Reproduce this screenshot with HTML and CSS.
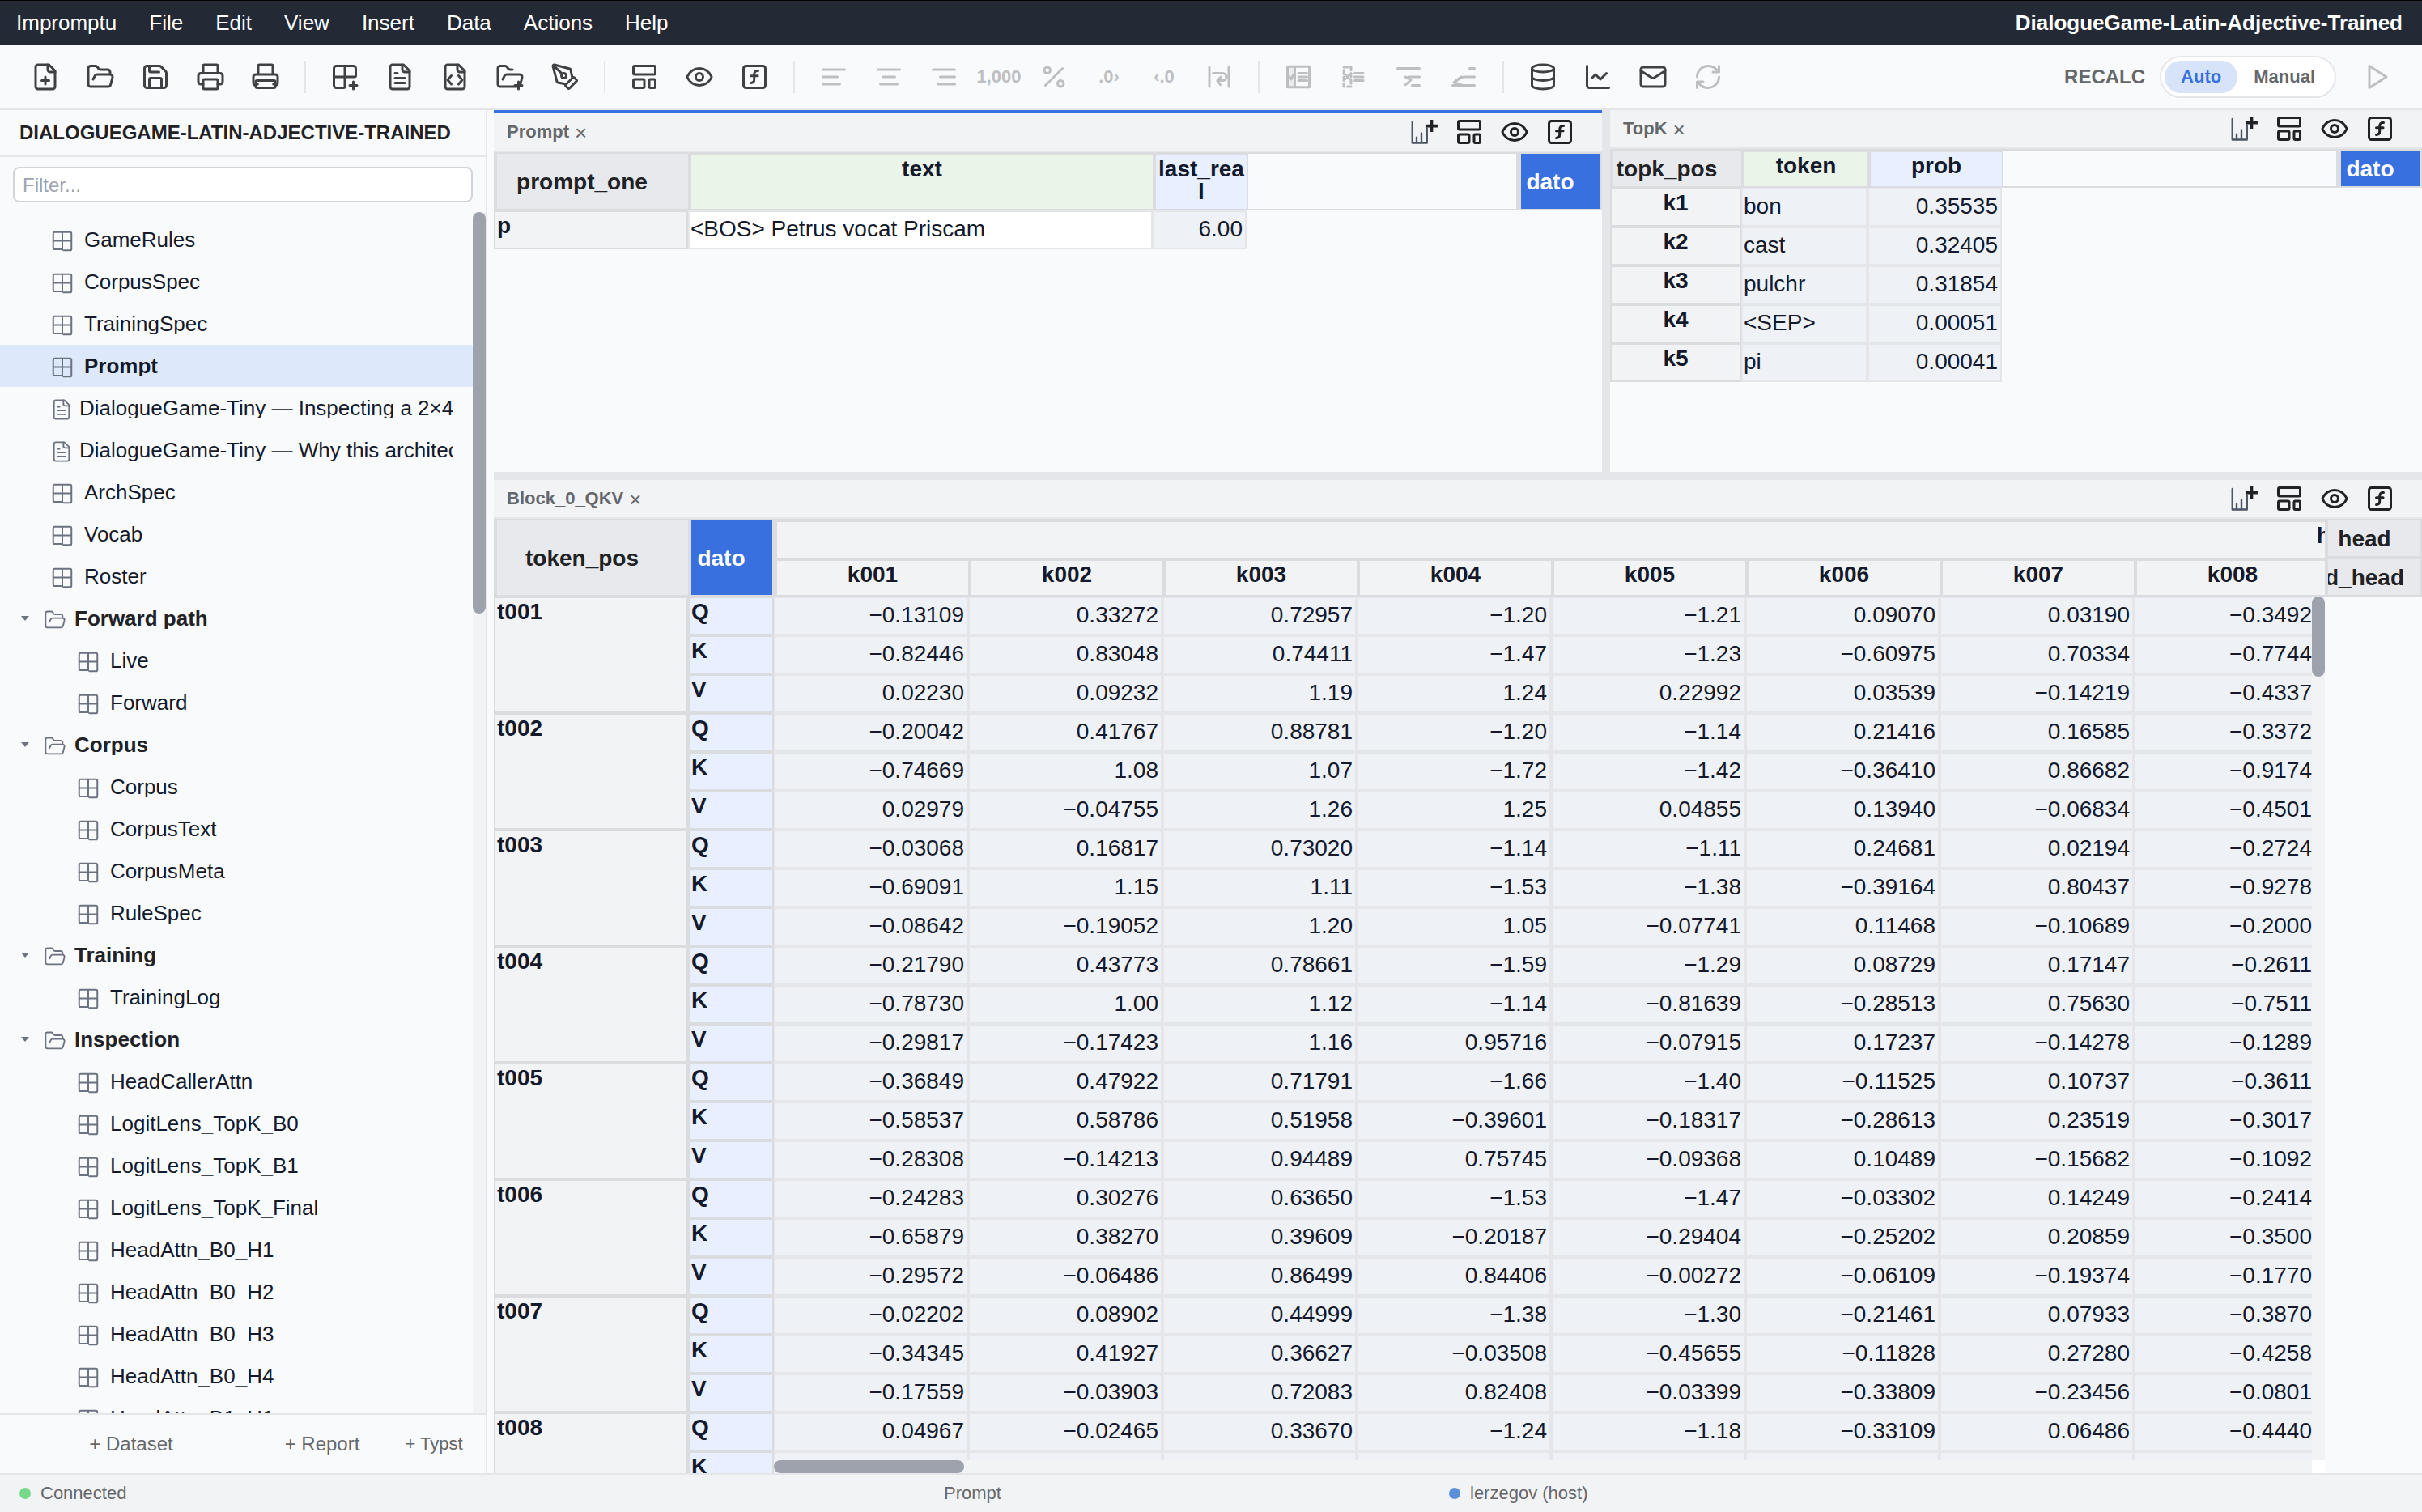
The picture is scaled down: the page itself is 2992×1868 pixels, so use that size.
FILE: index.html
```html
<!DOCTYPE html>
<html lang="en">
<head>
    <meta charset="UTF-8">
    <meta name="viewport" content="width=device-width, initial-scale=1.0">
    <title>Impromptu</title>
    <link rel="stylesheet" href="styles.css">
</head>
<body>
    <!-- Icon sprite -->
    <svg class="sprite" aria-hidden="true">
        <symbol id="i-new" viewBox="0 0 24 24"><path d="M15 2H6a2 2 0 0 0-2 2v16a2 2 0 0 0 2 2h12a2 2 0 0 0 2-2V7Z"/><path d="M14 2v4a2 2 0 0 0 2 2h4M9 15h6M12 18v-6"/></symbol>
        <symbol id="i-open" viewBox="0 0 24 24"><path d="m6 14 1.5-2.9A2 2 0 0 1 9.24 10H20a2 2 0 0 1 1.94 2.5l-1.54 6a2 2 0 0 1-1.95 1.5H4a2 2 0 0 1-2-2V5a2 2 0 0 1 2-2h3.9a2 2 0 0 1 1.69.9l.81 1.2a2 2 0 0 0 1.67.9H18a2 2 0 0 1 2 2v2"/></symbol>
        <symbol id="i-save" viewBox="0 0 24 24"><path d="M15.2 3a2 2 0 0 1 1.4.6l3.8 3.8a2 2 0 0 1 .6 1.4V19a2 2 0 0 1-2 2H5a2 2 0 0 1-2-2V5a2 2 0 0 1 2-2z"/><path d="M17 21v-7a1 1 0 0 0-1-1H8a1 1 0 0 0-1 1v7M7 3v4a1 1 0 0 0 1 1h7"/></symbol>
        <symbol id="i-print" viewBox="0 0 24 24"><path d="M6 18H4a2 2 0 0 1-2-2v-5a2 2 0 0 1 2-2h16a2 2 0 0 1 2 2v5a2 2 0 0 1-2 2h-2M6 9V3a1 1 0 0 1 1-1h10a1 1 0 0 1 1 1v6"/><rect x="6" y="14" width="12" height="8" rx="1"/></symbol>
        <symbol id="i-print-page" viewBox="0 0 24 24"><path d="M4 19a2 2 0 0 1-2-2v-5a2 2 0 0 1 2-2h16a2 2 0 0 1 2 2v5a2 2 0 0 1-2 2M6 10V3a1 1 0 0 1 1-1h10a1 1 0 0 1 1 1v7"/><path d="M5 15h14a1 1 0 0 1 1 1v4a1 1 0 0 1-1 1H5a1 1 0 0 1-1-1v-4a1 1 0 0 1 1-1zM4 18h1.5M18.5 18H20"/></symbol>
        <symbol id="i-table-add" viewBox="0 0 24 24"><path d="M12 3v17a1 1 0 0 1-1 1H5a2 2 0 0 1-2-2V5a2 2 0 0 1 2-2h14a2 2 0 0 1 2 2v6a1 1 0 0 1-1 1H3M16 19h6M19 22v-6"/></symbol>
        <symbol id="i-doc" viewBox="0 0 24 24"><path d="M15 2H6a2 2 0 0 0-2 2v16a2 2 0 0 0 2 2h12a2 2 0 0 0 2-2V7Z"/><path d="M14 2v4a2 2 0 0 0 2 2h4M10 9H8M16 13H8M16 17H8"/></symbol>
        <symbol id="i-code" viewBox="0 0 24 24"><path d="M15 2H6a2 2 0 0 0-2 2v16a2 2 0 0 0 2 2h12a2 2 0 0 0 2-2V7Z"/><path d="M14 2v4a2 2 0 0 0 2 2h4M9 11l-3 3.5L9 18M15 11l3 3.5-3 3.5"/></symbol>
        <symbol id="i-folder-add" viewBox="0 0 24 24"><path d="m6 14 1.5-2.9A2 2 0 0 1 9.24 10H20a2 2 0 0 1 1.94 2.5l-1.54 6a2 2 0 0 1-1.95 1.5H4a2 2 0 0 1-2-2V5a2 2 0 0 1 2-2h3.9a2 2 0 0 1 1.69.9l.81 1.2a2 2 0 0 0 1.67.9H14M16 19h6M19 22v-6"/></symbol>
        <symbol id="i-pen" viewBox="0 0 24 24"><path d="M15.707 21.293a1 1 0 0 1-1.414 0l-1.586-1.586a1 1 0 0 1 0-1.414l5.586-5.586a1 1 0 0 1 1.414 0l1.586 1.586a1 1 0 0 1 0 1.414zM18 13l-1.375-6.874a1 1 0 0 0-.746-.776L3.235 2.028a1 1 0 0 0-1.207 1.207L5.35 15.879a1 1 0 0 0 .776.746L13 18M2.3 2.3l7.286 7.286"/><circle cx="11" cy="11" r="2"/></symbol>
        <symbol id="i-layout" viewBox="0 0 24 24"><rect x="3" y="3" width="18" height="7" rx="1"/><rect x="3" y="14" width="9" height="7" rx="1"/><rect x="16" y="14" width="5" height="7" rx="1"/></symbol>
        <symbol id="i-eye" viewBox="0 0 24 24"><path d="M2.062 12.348a1 1 0 0 1 0-.696 10.75 10.75 0 0 1 19.876 0 1 1 0 0 1 0 .696 10.75 10.75 0 0 1-19.876 0"/><circle cx="12" cy="12" r="3"/></symbol>
        <symbol id="i-fn" viewBox="0 0 24 24"><rect x="3" y="3" width="18" height="18" rx="2"/><path d="M9 17c2 0 2.8-1 2.8-2.8V10c0-2 1-3.3 3.2-3M9 11.2h5.7"/></symbol>
        <symbol id="i-left" viewBox="0 0 24 24"><path d="M21 6H3M15 12H3M17 18H3"/></symbol>
        <symbol id="i-center" viewBox="0 0 24 24"><path d="M21 6H3M17 12H7M19 18H5"/></symbol>
        <symbol id="i-right" viewBox="0 0 24 24"><path d="M21 6H3M21 12H9M21 18H7"/></symbol>
        <symbol id="i-percent" viewBox="0 0 24 24"><path d="M19 5 5 19"/><circle cx="6.5" cy="6.5" r="2.5"/><circle cx="17.5" cy="17.5" r="2.5"/></symbol>
        <symbol id="i-wrap" viewBox="0 0 24 24"><path d="M4 4v16M20 4v16M7 9h8a3 3 0 0 1 0 6h-4M13.5 12l-3 3 2.5 3.500"/></symbol>
        <symbol id="i-rowlabel" viewBox="0 0 24 24"><path fill="currentColor" fill-opacity=".25" stroke="none" d="M3 4h6v16H3z"/><path d="M3 3.5h18v17H3zM9 3.5v17M4.500 12 6 14l2-4M12 9h7M12 12h7M12 15h7"/></symbol>
        <symbol id="i-rowskip" viewBox="0 0 24 24"><path stroke-dasharray="3 2.5" d="M4 4h6v16H4z"/><path d="M5 10l4 4M9 10l-4 4M13 9h7M13 12h7M13 15h7"/></symbol>
        <symbol id="i-sumtop" viewBox="0 0 24 24"><path d="M3 5h18M21 12h-9M9.500 12l4.500 2.500-4.500 4M10 12.500l4 2M15 19h6"/></symbol>
        <symbol id="i-sumbottom" viewBox="0 0 24 24"><path d="M17 5h4M21 12h-8c-3 0-5 2-9 4.500M10 12l-6 4.500 6 2M3 19h18"/></symbol>
        <symbol id="i-db" viewBox="0 0 24 24"><ellipse cx="12" cy="5" rx="9" ry="3"/><path d="M3 5v14a9 3 0 0 0 18 0V5M3 12a9 3 0 0 0 18 0"/></symbol>
        <symbol id="i-chart" viewBox="0 0 24 24"><path d="M3 3v16a2 2 0 0 0 2 2h16M19 9l-5 5-4-4-3 3"/></symbol>
        <symbol id="i-mail" viewBox="0 0 24 24"><rect x="2" y="4" width="20" height="16" rx="2"/><path d="m22 7-8.97 5.7a1.94 1.94 0 0 1-2.06 0L2 7"/></symbol>
        <symbol id="i-refresh" viewBox="0 0 24 24"><path d="M3 12a9 9 0 0 1 9-9 9.75 9.75 0 0 1 6.74 2.74L21 8M21 3v5h-5M21 12a9 9 0 0 1-9 9 9.75 9.75 0 0 1-6.74-2.74L3 16M8 16H3v5"/></symbol>
        <symbol id="i-play" viewBox="0 0 24 24"><path d="M6 3l14 9-14 9z"/></symbol>
        <symbol id="i-chart-add" viewBox="0 0 24 24"><path stroke="#4b5563" stroke-width="1.6" d="M2.5 4v17h12V9M6 21v-4.500M10 21v-8"/><path stroke-width="2.5" stroke-linecap="butt" d="M13.300 7h10M18.300 2v10"/></symbol>
        <symbol id="i-grid" viewBox="0 0 24 24"><path d="M12 20H4.500A1.500 1.500 0 0 1 3 18.500v-14A1.500 1.500 0 0 1 4.500 3h15A1.500 1.500 0 0 1 21 4.500v15a1.500 1.500 0 0 1-1.500 1.500H13M12 3v17M3 11.500h18"/></symbol>
    </svg>

    <!-- Menu bar -->
    <header class="menubar">
        <nav class="menus">
            <button>Impromptu</button>
            <button>File</button>
            <button>Edit</button>
            <button>View</button>
            <button>Insert</button>
            <button>Data</button>
            <button>Actions</button>
            <button>Help</button>
        </nav>
        <div class="doc-title">DialogueGame-Latin-Adjective-Trained</div>
    </header>

    <!-- Toolbar -->
    <div class="toolbar">
        <button class="tool" aria-label="New"><svg><use href="#i-new"/></svg></button>
        <button class="tool" aria-label="Open"><svg><use href="#i-open"/></svg></button>
        <button class="tool" aria-label="Save"><svg><use href="#i-save"/></svg></button>
        <button class="tool" aria-label="Print"><svg><use href="#i-print"/></svg></button>
        <button class="tool" aria-label="Print page"><svg><use href="#i-print-page"/></svg></button>
        <span class="sep"></span>
        <button class="tool" aria-label="Add dataset"><svg><use href="#i-table-add"/></svg></button>
        <button class="tool" aria-label="Add report"><svg><use href="#i-doc"/></svg></button>
        <button class="tool" aria-label="Add code"><svg><use href="#i-code"/></svg></button>
        <button class="tool" aria-label="Add folder"><svg><use href="#i-folder-add"/></svg></button>
        <button class="tool" aria-label="Pen"><svg><use href="#i-pen"/></svg></button>
        <span class="sep"></span>
        <button class="tool" aria-label="Layout"><svg><use href="#i-layout"/></svg></button>
        <button class="tool" aria-label="View"><svg><use href="#i-eye"/></svg></button>
        <button class="tool" aria-label="Formula"><svg><use href="#i-fn"/></svg></button>
        <span class="sep"></span>
        <button class="tool" disabled aria-label="Align left"><svg><use href="#i-left"/></svg></button>
        <button class="tool" disabled aria-label="Align center"><svg><use href="#i-center"/></svg></button>
        <button class="tool" disabled aria-label="Align right"><svg><use href="#i-right"/></svg></button>
        <button class="tool" disabled>1,000</button>
        <button class="tool" disabled aria-label="Percent"><svg><use href="#i-percent"/></svg></button>
        <button class="tool" disabled>.0›</button>
        <button class="tool" disabled>‹.0</button>
        <button class="tool" disabled aria-label="Wrap"><svg><use href="#i-wrap"/></svg></button>
        <span class="sep"></span>
        <button class="tool" disabled aria-label="Row labels"><svg><use href="#i-rowlabel"/></svg></button>
        <button class="tool" disabled aria-label="Skip rows"><svg><use href="#i-rowskip"/></svg></button>
        <button class="tool" disabled aria-label="Total above"><svg><use href="#i-sumtop"/></svg></button>
        <button class="tool" disabled aria-label="Total below"><svg><use href="#i-sumbottom"/></svg></button>
        <span class="sep"></span>
        <button class="tool" aria-label="Database"><svg><use href="#i-db"/></svg></button>
        <button class="tool" aria-label="Chart"><svg><use href="#i-chart"/></svg></button>
        <button class="tool" aria-label="Mail"><svg><use href="#i-mail"/></svg></button>
        <button class="tool" disabled aria-label="Refresh"><svg><use href="#i-refresh"/></svg></button>

        <div class="recalc">
            <span class="recalc-label">RECALC</span>
            <div class="switch">
                <button class="active">Auto</button>
                <button>Manual</button>
            </div>
            <button class="tool" disabled aria-label="Run"><svg><use href="#i-play"/></svg></button>
        </div>
    </div>

    <div class="app">
        <!-- Sidebar -->
        <aside class="sidebar">
            <h2 class="sidebar-title">DIALOGUEGAME-LATIN-ADJECTIVE-TRAINED</h2>
            <div class="filter">
                <input type="text" placeholder="Filter..." aria-label="Filter">
            </div>
            <div class="tree-wrap">
                <div class="tree">
                    <button class="item"><svg><use href="#i-grid"/></svg><span>GameRules</span></button>
                    <button class="item"><svg><use href="#i-grid"/></svg><span>CorpusSpec</span></button>
                    <button class="item"><svg><use href="#i-grid"/></svg><span>TrainingSpec</span></button>
                    <button class="item active"><svg><use href="#i-grid"/></svg><span>Prompt</span></button>
                    <button class="item doc"><svg><use href="#i-doc"/></svg><span>DialogueGame-Tiny — Inspecting a 2×4</span></button>
                    <button class="item doc"><svg><use href="#i-doc"/></svg><span>DialogueGame-Tiny — Why this architecture</span></button>
                    <button class="item"><svg><use href="#i-grid"/></svg><span>ArchSpec</span></button>
                    <button class="item"><svg><use href="#i-grid"/></svg><span>Vocab</span></button>
                    <button class="item"><svg><use href="#i-grid"/></svg><span>Roster</span></button>
                    <button class="item folder"><i class="caret"></i><svg><use href="#i-open"/></svg><span>Forward path</span></button>
                    <button class="item nested"><svg><use href="#i-grid"/></svg><span>Live</span></button>
                    <button class="item nested"><svg><use href="#i-grid"/></svg><span>Forward</span></button>
                    <button class="item folder"><i class="caret"></i><svg><use href="#i-open"/></svg><span>Corpus</span></button>
                    <button class="item nested"><svg><use href="#i-grid"/></svg><span>Corpus</span></button>
                    <button class="item nested"><svg><use href="#i-grid"/></svg><span>CorpusText</span></button>
                    <button class="item nested"><svg><use href="#i-grid"/></svg><span>CorpusMeta</span></button>
                    <button class="item nested"><svg><use href="#i-grid"/></svg><span>RuleSpec</span></button>
                    <button class="item folder"><i class="caret"></i><svg><use href="#i-open"/></svg><span>Training</span></button>
                    <button class="item nested"><svg><use href="#i-grid"/></svg><span>TrainingLog</span></button>
                    <button class="item folder"><i class="caret"></i><svg><use href="#i-open"/></svg><span>Inspection</span></button>
                    <button class="item nested"><svg><use href="#i-grid"/></svg><span>HeadCallerAttn</span></button>
                    <button class="item nested"><svg><use href="#i-grid"/></svg><span>LogitLens_TopK_B0</span></button>
                    <button class="item nested"><svg><use href="#i-grid"/></svg><span>LogitLens_TopK_B1</span></button>
                    <button class="item nested"><svg><use href="#i-grid"/></svg><span>LogitLens_TopK_Final</span></button>
                    <button class="item nested"><svg><use href="#i-grid"/></svg><span>HeadAttn_B0_H1</span></button>
                    <button class="item nested"><svg><use href="#i-grid"/></svg><span>HeadAttn_B0_H2</span></button>
                    <button class="item nested"><svg><use href="#i-grid"/></svg><span>HeadAttn_B0_H3</span></button>
                    <button class="item nested"><svg><use href="#i-grid"/></svg><span>HeadAttn_B0_H4</span></button>
                    <button class="item nested"><svg><use href="#i-grid"/></svg><span>HeadAttn_B1_H1</span></button>
                </div>
                <div class="track"><div class="thumb thumb-tree"></div></div>
            </div>
            <div class="add-bar">
                <button>+ Dataset</button>
                <button>+ Report</button>
                <button class="small">+ Typst</button>
            </div>
        </aside>

        <!-- Panes -->
        <main class="workspace">
            <section class="pane pane-prompt focused">
                <div class="pane-header">
                    <span class="pane-title">Prompt</span>
                    <button class="close" aria-label="Close">×</button>
                    <div class="pane-tools">
                        <button aria-label="Add chart"><svg><use href="#i-chart-add"/></svg></button>
                        <button aria-label="Layout"><svg><use href="#i-layout"/></svg></button>
                        <button aria-label="View"><svg><use href="#i-eye"/></svg></button>
                        <button aria-label="Formula"><svg><use href="#i-fn"/></svg></button>
                    </div>
                </div>
                <table class="grid">
                    <colgroup><col class="w-axis"><col class="w-text"><col class="w-real"><col><col class="w-dato"></colgroup>
                    <thead>
                        <tr class="tall">
                            <th class="corner">prompt_one</th>
                            <th class="col green">text</th>
                            <th class="col blue">last_real</th>
                            <th class="filler"></th>
                            <th class="dato side">dato</th>
                        </tr>
                    </thead>
                    <tbody>
                        <tr><th class="row">p</th><td class="str input">&lt;BOS&gt; Petrus vocat Priscam</td><td>6.00</td></tr>
                    </tbody>
                </table>
            </section>

            <div class="split split-v"></div>

            <section class="pane pane-topk">
                <div class="pane-header">
                    <span class="pane-title">TopK</span>
                    <button class="close" aria-label="Close">×</button>
                    <div class="pane-tools">
                        <button aria-label="Add chart"><svg><use href="#i-chart-add"/></svg></button>
                        <button aria-label="Layout"><svg><use href="#i-layout"/></svg></button>
                        <button aria-label="View"><svg><use href="#i-eye"/></svg></button>
                        <button aria-label="Formula"><svg><use href="#i-fn"/></svg></button>
                    </div>
                </div>
                <table class="grid">
                    <colgroup><col class="w-pos"><col class="w-token"><col class="w-prob"><col><col class="w-dato"></colgroup>
                    <thead>
                        <tr>
                            <th class="corner">topk_pos</th>
                            <th class="col green">token</th>
                            <th class="col blue">prob</th>
                            <th class="filler"></th>
                            <th class="dato side">dato</th>
                        </tr>
                    </thead>
                    <tbody>
                        <tr><th class="row mid">k1</th><td class="str">bon</td><td>0.35535</td></tr>
                        <tr><th class="row mid">k2</th><td class="str">cast</td><td>0.32405</td></tr>
                        <tr><th class="row mid">k3</th><td class="str">pulchr</td><td>0.31854</td></tr>
                        <tr><th class="row mid">k4</th><td class="str">&lt;SEP&gt;</td><td>0.00051</td></tr>
                        <tr><th class="row mid">k5</th><td class="str">pi</td><td>0.00041</td></tr>
                    </tbody>
                </table>
            </section>

            <div class="split split-h"></div>

            <section class="pane pane-block">
                <div class="pane-header">
                    <span class="pane-title">Block_0_QKV</span>
                    <button class="close" aria-label="Close">×</button>
                    <div class="pane-tools">
                        <button aria-label="Add chart"><svg><use href="#i-chart-add"/></svg></button>
                        <button aria-label="Layout"><svg><use href="#i-layout"/></svg></button>
                        <button aria-label="View"><svg><use href="#i-eye"/></svg></button>
                        <button aria-label="Formula"><svg><use href="#i-fn"/></svg></button>
                    </div>
                </div>
                <div class="block-body">
                    <div class="block-view">
                        <table class="grid wide">
                            <colgroup><col class="w-axis"><col class="w-qkv"><col span="16"></colgroup>
                            <thead>
                                <tr class="group-row">
                                    <th class="corner" rowspan="2">token_pos</th>
                                    <th class="dato" rowspan="2">dato</th>
                                    <th class="col" colspan="16">h1</th>
                                </tr>
                                <tr class="key-row">
                                    <th class="col">k001</th><th class="col">k002</th><th class="col">k003</th><th class="col">k004</th>
                                    <th class="col">k005</th><th class="col">k006</th><th class="col">k007</th><th class="col">k008</th>
                                </tr>
                            </thead>
                            <tbody id="blockRows"></tbody>
                        </table>
                        <div class="track track-y"><div class="thumb thumb-y"></div></div>
                        <div class="track track-x"><div class="thumb thumb-x"></div></div>
                        <div class="track-corner"></div>
                    </div>
                    <div class="block-axes">
                        <div class="axis">head</div>
                        <div class="axis">d_head</div>
                    </div>
                </div>
            </section>
        </main>
    </div>

    <!-- Status bar -->
    <footer class="statusbar">
        <div class="status"><i class="dot online"></i>Connected</div>
        <div class="status">Prompt</div>
        <div class="status"><i class="dot user"></i>lerzegov (host)</div>
    </footer>

    <script src="script.js"></script>
</body>
</html>
```

FILE: styles.css
```css
* {
    margin: 0;
    padding: 0;
    box-sizing: border-box;
}

:root {
    --bg: #f9fafc;
    --panel: #f2f3f5;
    --line: #e5e6e9;
    --head-line: #dbdce0;
    --accent: #3870e0;
    --text: #141a2b;
    --strong: #202225;
    --muted: #65676b;
    --icon: #3f4144;
    --thumb: #9ea2ad;
}

body {
    height: 100vh;
    display: flex;
    flex-direction: column;
    overflow: hidden;
    background: var(--bg);
    color: var(--text);
    font-family: "Liberation Sans", Arial, sans-serif;
    font-size: 26px;
}

button {
    background: none;
    border: none;
    color: inherit;
    font: inherit;
    cursor: pointer;
}

svg {
    display: block;
    width: 36px;
    height: 36px;
    flex-shrink: 0;
    fill: none;
    stroke: currentColor;
    stroke-width: 2;
    stroke-linecap: round;
    stroke-linejoin: round;
}

.sprite {
    display: none;
}

/* Menu bar */
.menubar {
    height: 56px;
    flex-shrink: 0;
    display: flex;
    align-items: center;
    justify-content: space-between;
    padding-right: 24px;
    background: #232935;
    border-top: 1px solid #000;
    color: #fff;
}

.menus {
    display: flex;
}

.menus button {
    padding: 0 20px;
}

.doc-title {
    font-weight: 600;
}

/* Toolbar */
.toolbar {
    height: 80px;
    flex-shrink: 0;
    display: flex;
    align-items: center;
    gap: 4px;
    padding: 0 24px;
    border-bottom: 2px solid var(--line);
}

.tool {
    width: 64px;
    height: 56px;
    display: flex;
    align-items: center;
    justify-content: center;
    color: var(--icon);
    font-size: 22px;
    font-weight: 600;
}

.tool:disabled {
    color: #bebfc1;
}

.sep {
    width: 2px;
    height: 40px;
    margin: 0 12px;
    background: var(--line);
}

.recalc {
    display: flex;
    align-items: center;
    gap: 18px;
    margin-left: auto;
}

.recalc-label {
    color: var(--muted);
    font-size: 24px;
    font-weight: 600;
}

.switch {
    height: 52px;
    display: flex;
    padding: 4px;
    border: 2px solid var(--line);
    border-radius: 26px;
    background: #fff;
}

.switch button {
    padding: 0 20px;
    border-radius: 20px;
    color: var(--muted);
    font-size: 22px;
    font-weight: 600;
}

.switch .active {
    background: #d6e3f9;
    color: var(--accent);
}

/* Layout */
.app {
    flex: 1;
    min-height: 0;
    display: flex;
}

/* Sidebar */
.sidebar {
    width: 602px;
    flex-shrink: 0;
    display: flex;
    flex-direction: column;
    border-right: 2px solid var(--line);
}

.sidebar-title {
    padding: 0 24px;
    border-bottom: 2px solid var(--line);
    color: var(--strong);
    font-size: 24px;
    line-height: 56px;
    white-space: nowrap;
}

.filter {
    padding: 12px 16px;
}

.filter input {
    display: block;
    width: 100%;
    height: 44px;
    padding: 2px 10px 0;
    border: 2px solid #d1d4da;
    border-radius: 8px;
    background: #fff;
    font: inherit;
    font-size: 24px;
}

.filter input::placeholder {
    color: #9ca3af;
}

.tree-wrap {
    flex: 1;
    min-height: 0;
    display: flex;
}

.tree {
    flex: 1;
    min-width: 0;
    overflow: hidden;
    padding-top: 8px;
}

.item {
    width: 100%;
    height: 52px;
    display: flex;
    align-items: center;
    gap: 12px;
    padding: 0 24px 0 62px;
    text-align: left;
}

.item span {
    min-width: 0;
    overflow: hidden;
    line-height: 26px;
    white-space: nowrap;
}

.item svg {
    width: 30px;
    height: 30px;
    margin-top: 4px;
    color: #6b7280;
    stroke-width: 1.6;
}

.item.nested {
    padding-left: 94px;
}

.item.active {
    background: #dde8fa;
    font-weight: 600;
}

.item.doc {
    gap: 8px;
}

.item.doc svg,
.item.folder svg {
    width: 28px;
    height: 28px;
}

.item.folder {
    gap: 10px;
    padding-left: 26px;
    color: var(--strong);
    font-weight: 600;
}

.caret {
    margin-right: 8px;
    border: 5px solid transparent;
    border-top: 6px solid #6b7280;
    border-bottom: none;
}

.track {
    width: 16px;
    background: var(--panel);
}

.thumb {
    border-radius: 8px;
    background: var(--thumb);
}

.thumb-tree {
    height: 33.4%;
}

.add-bar {
    display: grid;
    grid-template-columns: 308fr 156fr 112fr;
    gap: 4px;
    height: 74px;
    padding: 0 8px;
    border-top: 2px solid var(--line);
    color: var(--muted);
    font-size: 24px;
    white-space: nowrap;
}

.add-bar .small {
    font-size: 22px;
}

/* Workspace panes */
.workspace {
    flex: 1;
    min-width: 0;
    display: grid;
    grid-template-columns: minmax(0, 1369fr) 10px minmax(0, 1003fr);
    grid-template-rows: minmax(0, 447fr) 10px minmax(0, 1227fr);
    padding-left: 8px;
}

.split {
    background: var(--line);
}

.split-h,
.pane-block {
    grid-column: 1 / -1;
}

.pane {
    display: flex;
    flex-direction: column;
    overflow: hidden;
}

.pane.focused {
    border-top: 4px solid var(--accent);
}

.pane-header {
    height: 48px;
    flex-shrink: 0;
    display: flex;
    align-items: center;
    padding: 0 34px 0 16px;
    background: var(--panel);
    border-bottom: 2px solid var(--line);
    color: var(--muted);
}

.pane-title {
    font-size: 22px;
    font-weight: 600;
}

.close {
    margin-left: 7px;
    padding-top: 2px;
}

.pane-tools {
    display: flex;
    gap: 20px;
    margin-left: auto;
    color: var(--strong);
}

/* Data grids */
.grid {
    width: 100%;
    table-layout: fixed;
    border-collapse: separate;
    border-spacing: 0;
    font-size: 28px;
    line-height: 28px;
}

.w-axis { width: 240px; }
.w-text { width: 574px; }
.w-real { width: 116px; }
.w-dato { width: 106px; }
.w-qkv { width: 106px; }
.w-pos { width: 162px; }
.w-token { width: 156px; }
.w-prob { width: 166px; }

.grid.wide {
    width: 4186px;
}

.grid tr {
    height: 48px;
}

.grid tr.tall {
    height: 72px;
}

.grid .group-row {
    height: 50px;
}

.grid .key-row {
    height: 46px;
}

.grid th,
.grid td {
    vertical-align: top;
    border: 2px solid var(--head-line);
}

.grid td {
    padding: 7px 3px 0 1px;
    background: #eef1f6;
    border-color: var(--line);
    text-align: right;
    white-space: nowrap;
}

.grid td.str {
    text-align: left;
}

.grid td.input {
    background: #fff;
}

/* eighth column runs under the vertical scrollbar */
.wide td:last-child {
    padding-right: 18px;
}

.grid th.row {
    padding: 3px 2px 0;
    background: var(--panel);
    text-align: left;
}

.grid th.mid {
    text-align: center;
}

.grid th.key {
    background: #e8effe;
}

.grid th.corner {
    padding: 2px 26px 0 0;
    border-left-width: 4px;
    border-right-width: 0;
    background: #e8e9ed;
    color: var(--strong);
    vertical-align: middle;
}

.grid th.col {
    padding-top: 3px;
    border-top-width: 4px;
    border-left-width: 4px;
    border-right-width: 0;
    background: var(--panel);
    word-break: break-all;
}

.grid .key-row th.col {
    border-top-width: 2px;
}

.grid th.green {
    background: #eaf4e9;
}

.grid th.blue {
    background: #e8effe;
}

.grid th.filler {
    border-right-width: 0;
}

.grid th.dato {
    padding: 2px 26px 0 0;
    border-left-width: 4px;
    background: var(--accent);
    color: #fff;
    vertical-align: middle;
}

.grid th.side {
    border-left-width: 6px;
}

/* Block pane */
.block-body {
    flex: 1;
    min-height: 0;
    display: flex;
}

.block-view {
    position: relative;
    flex: 1;
    min-width: 0;
    overflow: hidden;
}

.track-y {
    position: absolute;
    top: 96px;
    right: 0;
    bottom: 16px;
}

.thumb-y {
    height: 99px;
}

.track-x {
    position: absolute;
    left: 346px;
    right: 16px;
    bottom: 0;
    width: auto;
}

.thumb-x {
    width: 235px;
    height: 16px;
}

.track-corner {
    position: absolute;
    right: 0;
    bottom: 0;
    width: 16px;
    height: 16px;
    background: #fff;
}

.block-axes {
    width: 120px;
    flex-shrink: 0;
}

.axis {
    height: 48px;
    display: flex;
    align-items: center;
    justify-content: center;
    overflow: hidden;
    padding: 2px 24px 0 0;
    border: 2px solid var(--head-line);
    border-left-width: 4px;
    background: #e8e9ed;
    color: var(--strong);
    font-size: 28px;
    font-weight: 600;
}

/* Status bar */
.statusbar {
    height: 48px;
    flex-shrink: 0;
    display: grid;
    grid-template-columns: 1142fr 624fr 1178fr;
    align-items: center;
    padding: 0 24px;
    background: var(--panel);
    border-top: 2px solid var(--line);
    color: var(--muted);
    font-size: 22px;
}

.status {
    display: flex;
    align-items: center;
    gap: 12px;
}

.dot {
    width: 14px;
    height: 14px;
    border-radius: 50%;
}

.dot.online {
    background: #76d989;
}

.dot.user {
    background: #5b8fd9;
}
```

FILE: script.js
```js
// Three rows (Q, K, V) for each token position
const blockData = [
    ['−0.13109', '0.33272', '0.72957', '−1.20', '−1.21', '0.09070', '0.03190', '−0.3492'],
    ['−0.82446', '0.83048', '0.74411', '−1.47', '−1.23', '−0.60975', '0.70334', '−0.7744'],
    ['0.02230', '0.09232', '1.19', '1.24', '0.22992', '0.03539', '−0.14219', '−0.4337'],
    ['−0.20042', '0.41767', '0.88781', '−1.20', '−1.14', '0.21416', '0.16585', '−0.3372'],
    ['−0.74669', '1.08', '1.07', '−1.72', '−1.42', '−0.36410', '0.86682', '−0.9174'],
    ['0.02979', '−0.04755', '1.26', '1.25', '0.04855', '0.13940', '−0.06834', '−0.4501'],
    ['−0.03068', '0.16817', '0.73020', '−1.14', '−1.11', '0.24681', '0.02194', '−0.2724'],
    ['−0.69091', '1.15', '1.11', '−1.53', '−1.38', '−0.39164', '0.80437', '−0.9278'],
    ['−0.08642', '−0.19052', '1.20', '1.05', '−0.07741', '0.11468', '−0.10689', '−0.2000'],
    ['−0.21790', '0.43773', '0.78661', '−1.59', '−1.29', '0.08729', '0.17147', '−0.2611'],
    ['−0.78730', '1.00', '1.12', '−1.14', '−0.81639', '−0.28513', '0.75630', '−0.7511'],
    ['−0.29817', '−0.17423', '1.16', '0.95716', '−0.07915', '0.17237', '−0.14278', '−0.1289'],
    ['−0.36849', '0.47922', '0.71791', '−1.66', '−1.40', '−0.11525', '0.10737', '−0.3611'],
    ['−0.58537', '0.58786', '0.51958', '−0.39601', '−0.18317', '−0.28613', '0.23519', '−0.3017'],
    ['−0.28308', '−0.14213', '0.94489', '0.75745', '−0.09368', '0.10489', '−0.15682', '−0.1092'],
    ['−0.24283', '0.30276', '0.63650', '−1.53', '−1.47', '−0.03302', '0.14249', '−0.2414'],
    ['−0.65879', '0.38270', '0.39609', '−0.20187', '−0.29404', '−0.25202', '0.20859', '−0.3500'],
    ['−0.29572', '−0.06486', '0.86499', '0.84406', '−0.00272', '−0.06109', '−0.19374', '−0.1770'],
    ['−0.02202', '0.08902', '0.44999', '−1.38', '−1.30', '−0.21461', '0.07933', '−0.3870'],
    ['−0.34345', '0.41927', '0.36627', '−0.03508', '−0.45655', '−0.11828', '0.27280', '−0.4258'],
    ['−0.17559', '−0.03903', '0.72083', '0.82408', '−0.03399', '−0.33809', '−0.23456', '−0.0801'],
    ['0.04967', '−0.02465', '0.33670', '−1.24', '−1.18', '−0.33109', '0.06486', '−0.4440'],
    ['', '', '', '', '', '', '', '']
];

const keys = ['Q', 'K', 'V'];

document.getElementById('blockRows').innerHTML = blockData.map((values, i) => {
    const pos = 't' + String(Math.floor(i / 3) + 1).padStart(3, '0');
    const span = Math.min(3, blockData.length - i);
    const head = i % 3 === 0 ? `<th class="row" rowspan="${span}">${pos}</th>` : '';
    const cells = values.map(v => `<td>${v}</td>`).join('');
    return `<tr>${head}<th class="row key">${keys[i % 3]}</th>${cells}</tr>`;
}).join('');
```
